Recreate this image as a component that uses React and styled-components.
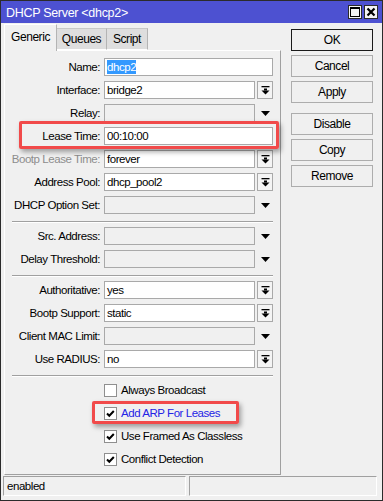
import { styled, createGlobalStyle } from 'styled-components';

const GlobalStyle = createGlobalStyle`
  body {
    margin: 0;
    background: #fff;
    font-family: 'Liberation Sans', Arial, sans-serif;
    font-size: 11.5px;
    letter-spacing: -0.45px;
    color: #000;
  }
`;

const formRows = [
  { label: 'Name:', value: 'dhcp2', kind: 'text', selected: true },
  { label: 'Interface:', value: 'bridge2', kind: 'combo' },
  { label: 'Relay:', kind: 'empty' },
  { label: 'Lease Time:', value: '00:10:00', kind: 'text' },
  { label: 'Bootp Lease Time:', value: 'forever', kind: 'combo', dim: true },
  { label: 'Address Pool:', value: 'dhcp_pool2', kind: 'combo' },
  { label: 'DHCP Option Set:', kind: 'empty' },
  'sep',
  { label: 'Src. Address:', kind: 'empty' },
  { label: 'Delay Threshold:', kind: 'empty' },
  'sep',
  { label: 'Authoritative:', value: 'yes', kind: 'combo' },
  { label: 'Bootp Support:', value: 'static', kind: 'combo' },
  { label: 'Client MAC Limit:', kind: 'empty' },
  { label: 'Use RADIUS:', value: 'no', kind: 'combo' },
  'sep',
];

const checks = [
  { label: 'Always Broadcast', checked: false },
  { label: 'Add ARP For Leases', checked: true, blue: true },
  { label: 'Use Framed As Classless', checked: true },
  { label: 'Conflict Detection', checked: true },
];

const ComboIcon = () => (
  <svg width="9" height="9" viewBox="0 0 9 9">
    <rect x="0.5" y="0" width="8" height="1.3" fill="#000" />
    <rect x="3" y="2.5" width="3" height="2" fill="#000" />
    <polygon points="0.5,4.5 8.5,4.5 4.5,8.5" fill="#000" />
  </svg>
);

const DownArrow = () => (
  <svg width="9" height="5" viewBox="0 0 9 5">
    <polygon points="0,0 9,0 4.5,5" fill="#000" />
  </svg>
);

const CheckMark = () => (
  <svg width="11" height="11" viewBox="0 0 11 11">
    <polyline points="2,5.5 4.3,7.8 8.8,3" fill="none" stroke="#000" strokeWidth="2" />
  </svg>
);

const App = () => {
  return (
    <>
      <GlobalStyle />
      <Window>
        <TitleBar>
          <TitleText>DHCP Server &lt;dhcp2&gt;</TitleText>
          <TitleButtons>
            <TitleButton>
              <svg width="10" height="10" viewBox="0 0 10 10">
                <rect x="0.5" y="0.5" width="9" height="9" fill="none" stroke="#000" />
                <rect x="0" y="0" width="10" height="2" fill="#000" />
              </svg>
            </TitleButton>
            <TitleButton>
              <svg width="10" height="10" viewBox="0 0 10 10">
                <path d="M1.5 1.5 L8.5 8.5 M8.5 1.5 L1.5 8.5" stroke="#000" strokeWidth="2.2" />
              </svg>
            </TitleButton>
          </TitleButtons>
        </TitleBar>

        <Body>
          <LeftColumn>
            <TabRow>
              <Tab $active $width="53px">Generic</Tab>
              <Tab $width="50px">Queues</Tab>
              <Tab $width="41px">Script</Tab>
            </TabRow>
            <Panel>
              {formRows.map((row, i) =>
                row === 'sep' ? (
                  <Separator key={i} />
                ) : (
                  <FormRow key={i}>
                    <Label $dim={row.dim}>{row.label}</Label>
                    <Field>
                      <Input $empty={row.kind === 'empty'}>
                        {row.selected ? <Selected>{row.value}</Selected> : row.value}
                      </Input>
                      {row.kind === 'combo' && (
                        <ComboButton>
                          <ComboIcon />
                        </ComboButton>
                      )}
                      {row.kind === 'empty' && (
                        <ArrowSlot>
                          <DownArrow />
                        </ArrowSlot>
                      )}
                    </Field>
                  </FormRow>
                )
              )}
              {checks.map((c) => (
                <CheckRow key={c.label}>
                  <CheckBox>{c.checked && <CheckMark />}</CheckBox>
                  <CheckLabel $blue={c.blue}>{c.label}</CheckLabel>
                </CheckRow>
              ))}
            </Panel>
          </LeftColumn>

          <ButtonColumn>
            <ButtonGroup>
              <ActionButton $default>OK</ActionButton>
              <ActionButton>Cancel</ActionButton>
              <ActionButton>Apply</ActionButton>
            </ButtonGroup>
            <ButtonGroup>
              <ActionButton>Disable</ActionButton>
              <ActionButton>Copy</ActionButton>
              <ActionButton>Remove</ActionButton>
            </ButtonGroup>
          </ButtonColumn>
        </Body>

        <StatusBar>
          <StatusCell $width="183px">enabled</StatusCell>
          <StatusCell $width="188px" />
        </StatusBar>

        <Highlight $left="18px" $top="120px" $width="260px" $height="28px" />
        <Highlight $left="91px" $top="400px" $width="147px" $height="23px" />
      </Window>
    </>
  );
};

export default App;

const Window = styled.div`
  position: relative;
  width: 383px;
  height: 501px;
  box-sizing: border-box;
  border: 1px solid #2b2b2b;
  background: #f0f0f0;
  display: flex;
  flex-direction: column;
  overflow: hidden;
`;

const TitleBar = styled.div`
  height: 22px;
  flex-shrink: 0;
  background: #4d51d1;
  display: flex;
  align-items: center;
  padding: 0 4px 0 5px;
`;

const TitleText = styled.span`
  color: #fff;
  font-size: 12.5px;
  letter-spacing: -0.3px;
  padding-top: 1px;
`;

const TitleButtons = styled.div`
  margin-left: auto;
  display: flex;
  gap: 2px;
`;

const TitleButton = styled.div`
  width: 14px;
  height: 14px;
  box-sizing: border-box;
  border: 1px solid #2b2b2b;
  background: #f4f4f4;
  display: flex;
  align-items: center;
  justify-content: center;
`;

const Body = styled.div`
  display: flex;
  padding: 1px 0 0 3px;
`;

const LeftColumn = styled.div`
  width: 277px;
  display: flex;
  flex-direction: column;
`;

const TabRow = styled.div`
  height: 26px;
  display: flex;
  align-items: flex-end;
  position: relative;
  z-index: 1;
`;

const Tab = styled.div`
  box-sizing: border-box;
  width: ${(p) => p.$width};
  height: ${(p) => (p.$active ? '27px' : '22px')};
  margin-bottom: ${(p) => (p.$active ? '-1px' : '0')};
  padding-bottom: ${(p) => (p.$active ? '3px' : '0')};
  display: flex;
  align-items: center;
  justify-content: center;
  font-size: 12px;
  background: ${(p) => (p.$active ? '#f0f0f0' : '#dedede')};
  border: 1px solid #b4b4b4;
  border-bottom: ${(p) => (p.$active ? 'none' : '1px solid #ffffff')};
  border-left-color: ${(p) => (p.$active ? '#ffffff' : '#d8d8d8')};
  border-top-color: ${(p) => (p.$active ? '#ffffff' : '#c8c8c8')};
  & + & {
    border-left: none;
  }
`;

const Panel = styled.div`
  height: 425px;
  box-sizing: border-box;
  border: 1px solid;
  border-color: #ffffff #a0a0a0 #a0a0a0 #ffffff;
  padding-top: 7px;
  display: flex;
  flex-direction: column;
`;

const FormRow = styled.div`
  display: flex;
  align-items: center;
  height: 18px;
  margin-bottom: 5px;
`;

const Label = styled.div`
  width: 95px;
  text-align: right;
  margin-right: 4px;
  white-space: nowrap;
  color: ${(p) => (p.$dim ? '#8d8d8d' : '#000')};
`;

const Field = styled.div`
  width: 169px;
  height: 18px;
  display: flex;
`;

const Input = styled.div`
  flex: 1;
  box-sizing: border-box;
  height: 18px;
  border: 1px solid #a9a9a9;
  background: ${(p) => (p.$empty ? '#f0f0f0' : '#ffffff')};
  padding-left: 2px;
  display: flex;
  align-items: center;
  white-space: nowrap;
`;

const Selected = styled.span`
  background: #3399ff;
  color: #fff;
  line-height: 14px;
`;

const ComboButton = styled.div`
  width: 16px;
  margin-left: 2px;
  box-sizing: border-box;
  border: 1px solid #a9a9a9;
  background: #f4f4f4;
  display: flex;
  align-items: center;
  justify-content: center;
`;

const ArrowSlot = styled.div`
  width: 16px;
  margin-left: 2px;
  display: flex;
  align-items: center;
  justify-content: center;
`;

const Separator = styled.div`
  margin: 2px 7px 4px 7px;
  border-top: 1px solid #a0a0a0;
  border-bottom: 1px solid #ffffff;
`;

const CheckRow = styled.div`
  display: flex;
  align-items: center;
  height: 18px;
  margin-bottom: 5px;
  padding-left: 99px;
`;

const CheckBox = styled.div`
  width: 13px;
  height: 13px;
  box-sizing: border-box;
  border: 1px solid #8f8f8f;
  background: #fff;
  display: flex;
  align-items: center;
  justify-content: center;
  margin-right: 4px;
`;

const CheckLabel = styled.span`
  color: ${(p) => (p.$blue ? '#2424e6' : '#000')};
`;

const ButtonColumn = styled.div`
  width: 82px;
  margin: 5px 0 0 10px;
  display: flex;
  flex-direction: column;
  gap: 10px;
`;

const ButtonGroup = styled.div`
  display: flex;
  flex-direction: column;
  gap: 4px;
`;

const ActionButton = styled.div`
  height: 22px;
  box-sizing: border-box;
  border: 1px solid ${(p) => (p.$default ? '#1a1a1a' : '#adadad')};
  background: #f0f0f0;
  font-size: 12px;
  display: flex;
  align-items: center;
  justify-content: center;
`;

const StatusBar = styled.div`
  display: flex;
  gap: 3px;
  margin-top: 1px;
  padding: 0 4px 0 2px;
`;

const StatusCell = styled.div`
  width: ${(p) => p.$width};
  height: 20px;
  box-sizing: border-box;
  border: 1px solid;
  border-color: #a0a0a0 #ffffff #ffffff #a0a0a0;
  padding-left: 3px;
  display: flex;
  align-items: center;
`;

const Highlight = styled.div`
  position: absolute;
  left: ${(p) => p.$left};
  top: ${(p) => p.$top};
  width: ${(p) => p.$width};
  height: ${(p) => p.$height};
  box-sizing: border-box;
  border: 3px solid #f14a4a;
  border-radius: 2px;
  box-shadow: 2px 3px 5px rgba(0, 0, 0, 0.35);
  pointer-events: none;
`;
